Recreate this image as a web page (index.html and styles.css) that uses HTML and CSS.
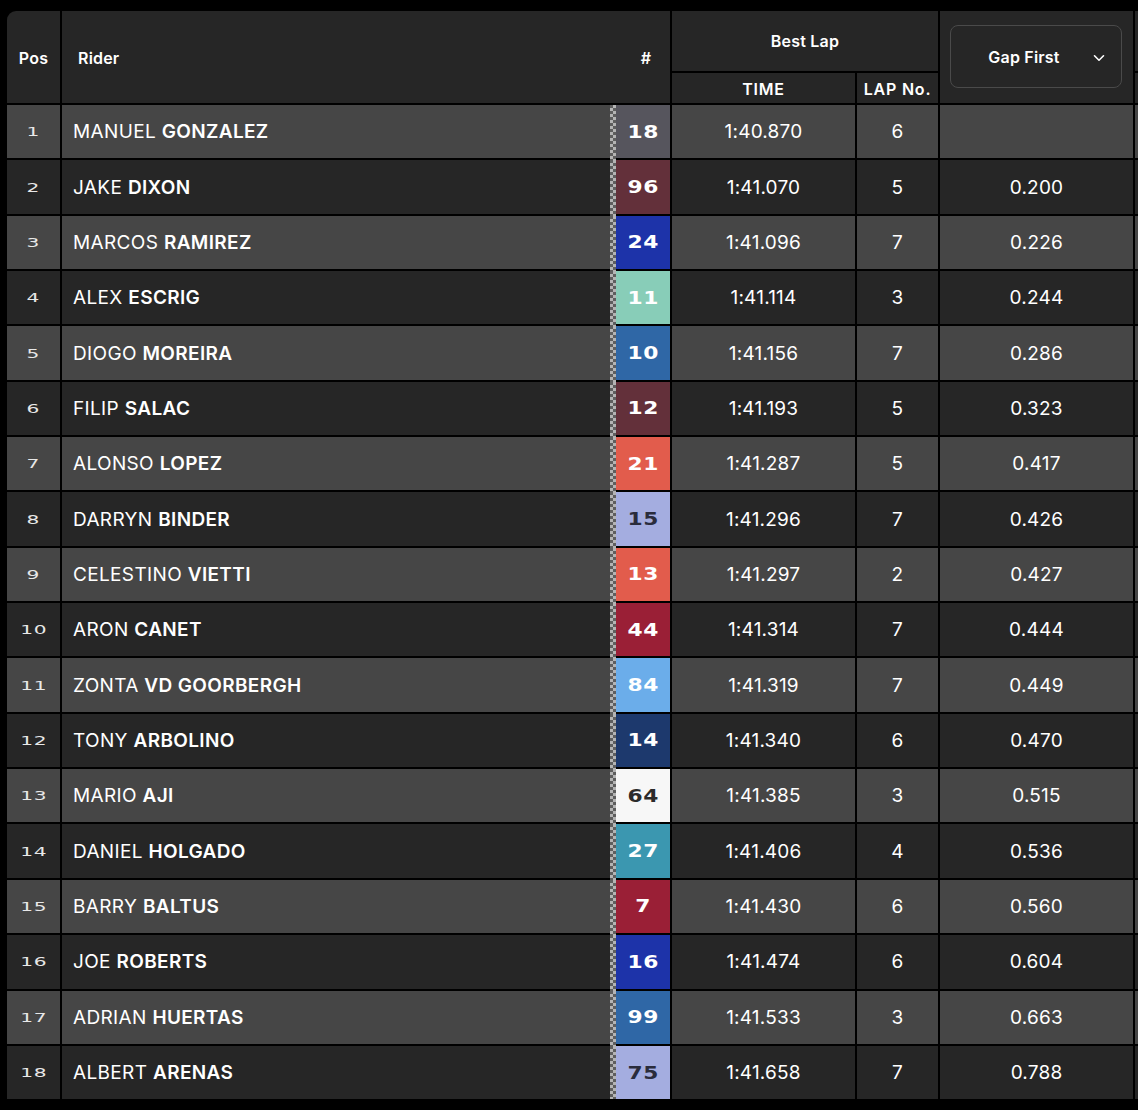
FILE: index.html
```html
<!DOCTYPE html>
<html lang="en">
<head>
<meta charset="utf-8">
<title>Best Lap Standings</title>
<link rel="stylesheet" href="styles.css">
</head>
<body>
<div class="board">
  <div class="head">
    <div class="hc h-pos">Pos</div>
    <div class="hc h-rider"><span>Rider</span><span class="h-num">#</span></div>
    <div class="h-group">
      <div class="hc h-top">Best Lap</div>
      <div class="h-sub"><div class="hc caps">TIME</div><div class="hc caps">LAP No.</div></div>
    </div>
    <div class="hc h-gap">
      <div class="select"><span>Gap First</span>
        <svg class="chev" width="12" height="8" viewBox="0 0 12 8"><path d="M1.5 1.8 L6 6.2 L10.5 1.8" fill="none" stroke="#fff" stroke-width="1.6" stroke-linecap="round" stroke-linejoin="round"/></svg>
      </div>
    </div>
    <div class="h-group">
      <div class="hc h-top"></div>
      <div class="h-sub"><div class="hc"></div></div>
    </div>
  </div>

  <div class="row odd"><div class="pos"><span>1</span></div><div class="rider"><span class="name">MANUEL <b>GONZALEZ</b></span><span class="flag"></span><span class="num n-grey"><span>18</span></span></div><div class="cell">1:40.870</div><div class="cell">6</div><div class="cell"></div><div class="cell"></div></div>
  <div class="row"><div class="pos"><span>2</span></div><div class="rider"><span class="name">JAKE <b>DIXON</b></span><span class="flag"></span><span class="num n-maroon"><span>96</span></span></div><div class="cell">1:41.070</div><div class="cell">5</div><div class="cell">0.200</div><div class="cell"></div></div>
  <div class="row odd"><div class="pos"><span>3</span></div><div class="rider"><span class="name">MARCOS <b>RAMIREZ</b></span><span class="flag"></span><span class="num n-blue"><span>24</span></span></div><div class="cell">1:41.096</div><div class="cell">7</div><div class="cell">0.226</div><div class="cell"></div></div>
  <div class="row"><div class="pos"><span>4</span></div><div class="rider"><span class="name">ALEX <b>ESCRIG</b></span><span class="flag"></span><span class="num n-mint"><span>11</span></span></div><div class="cell">1:41.114</div><div class="cell">3</div><div class="cell">0.244</div><div class="cell"></div></div>
  <div class="row odd"><div class="pos"><span>5</span></div><div class="rider"><span class="name">DIOGO <b>MOREIRA</b></span><span class="flag"></span><span class="num n-mid"><span>10</span></span></div><div class="cell">1:41.156</div><div class="cell">7</div><div class="cell">0.286</div><div class="cell"></div></div>
  <div class="row"><div class="pos"><span>6</span></div><div class="rider"><span class="name">FILIP <b>SALAC</b></span><span class="flag"></span><span class="num n-maroon"><span>12</span></span></div><div class="cell">1:41.193</div><div class="cell">5</div><div class="cell">0.323</div><div class="cell"></div></div>
  <div class="row odd"><div class="pos"><span>7</span></div><div class="rider"><span class="name">ALONSO <b>LOPEZ</b></span><span class="flag"></span><span class="num n-coral"><span>21</span></span></div><div class="cell">1:41.287</div><div class="cell">5</div><div class="cell">0.417</div><div class="cell"></div></div>
  <div class="row"><div class="pos"><span>8</span></div><div class="rider"><span class="name">DARRYN <b>BINDER</b></span><span class="flag"></span><span class="num n-lav"><span>15</span></span></div><div class="cell">1:41.296</div><div class="cell">7</div><div class="cell">0.426</div><div class="cell"></div></div>
  <div class="row odd"><div class="pos"><span>9</span></div><div class="rider"><span class="name">CELESTINO <b>VIETTI</b></span><span class="flag"></span><span class="num n-coral"><span>13</span></span></div><div class="cell">1:41.297</div><div class="cell">2</div><div class="cell">0.427</div><div class="cell"></div></div>
  <div class="row"><div class="pos"><span>10</span></div><div class="rider"><span class="name">ARON <b>CANET</b></span><span class="flag"></span><span class="num n-red"><span>44</span></span></div><div class="cell">1:41.314</div><div class="cell">7</div><div class="cell">0.444</div><div class="cell"></div></div>
  <div class="row odd"><div class="pos"><span>11</span></div><div class="rider"><span class="name">ZONTA <b>VD GOORBERGH</b></span><span class="flag"></span><span class="num n-sky"><span>84</span></span></div><div class="cell">1:41.319</div><div class="cell">7</div><div class="cell">0.449</div><div class="cell"></div></div>
  <div class="row"><div class="pos"><span>12</span></div><div class="rider"><span class="name">TONY <b>ARBOLINO</b></span><span class="flag"></span><span class="num n-navy"><span>14</span></span></div><div class="cell">1:41.340</div><div class="cell">6</div><div class="cell">0.470</div><div class="cell"></div></div>
  <div class="row odd"><div class="pos"><span>13</span></div><div class="rider"><span class="name">MARIO <b>AJI</b></span><span class="flag"></span><span class="num n-white"><span>64</span></span></div><div class="cell">1:41.385</div><div class="cell">3</div><div class="cell">0.515</div><div class="cell"></div></div>
  <div class="row"><div class="pos"><span>14</span></div><div class="rider"><span class="name">DANIEL <b>HOLGADO</b></span><span class="flag"></span><span class="num n-teal"><span>27</span></span></div><div class="cell">1:41.406</div><div class="cell">4</div><div class="cell">0.536</div><div class="cell"></div></div>
  <div class="row odd"><div class="pos"><span>15</span></div><div class="rider"><span class="name">BARRY <b>BALTUS</b></span><span class="flag"></span><span class="num n-red"><span>7</span></span></div><div class="cell">1:41.430</div><div class="cell">6</div><div class="cell">0.560</div><div class="cell"></div></div>
  <div class="row"><div class="pos"><span>16</span></div><div class="rider"><span class="name">JOE <b>ROBERTS</b></span><span class="flag"></span><span class="num n-blue"><span>16</span></span></div><div class="cell">1:41.474</div><div class="cell">6</div><div class="cell">0.604</div><div class="cell"></div></div>
  <div class="row odd"><div class="pos"><span>17</span></div><div class="rider"><span class="name">ADRIAN <b>HUERTAS</b></span><span class="flag"></span><span class="num n-mid"><span>99</span></span></div><div class="cell">1:41.533</div><div class="cell">3</div><div class="cell">0.663</div><div class="cell"></div></div>
  <div class="row last"><div class="pos"><span>18</span></div><div class="rider"><span class="name">ALBERT <b>ARENAS</b></span><span class="flag"></span><span class="num n-lav"><span>75</span></span></div><div class="cell">1:41.658</div><div class="cell">7</div><div class="cell">0.788</div><div class="cell"></div></div>
</div>
</body>
</html>
```

FILE: styles.css
```css
html, body {
  margin: 0;
  background: #000;
  overflow: hidden;
}
body {
  padding: 11px 0 0 7px;
  font-family: Inter, "Open Sans", sans-serif;
  color: #fff;
}
.board {
  width: 1160px;
  display: flex;
  flex-direction: column;
  gap: 2px;
  border-top-left-radius: 9px;
  overflow: hidden;
}
.head {
  display: grid;
  grid-template-columns: 53px 608px 266px 193px 200px;
  gap: 2px;
  height: 92px;
}
.hc {
  background: #262626;
  font-size: 16px;
  font-weight: 600;
  letter-spacing: 0.2px;
  display: flex;
  align-items: center;
  justify-content: center;
}
.hc.caps {
  letter-spacing: 0.8px;
}
.h-pos, .h-rider {
  padding-top: 2px;
}
.h-rider {
  justify-content: space-between;
  padding-left: 16px;
}
.h-num {
  width: 48px;
  text-align: center;
}
.h-group {
  display: flex;
  flex-direction: column;
  gap: 2px;
}
.h-top {
  height: 60px;
}
.h-sub {
  flex: 1;
  display: grid;
  grid-template-columns: 183px 81px;
  gap: 2px;
}
.h-sub .hc {
  padding-top: 2px;
}
.h-gap {
  padding: 14px 11px 15px 10px;
}
.select {
  flex: 1;
  height: 100%;
  box-sizing: border-box;
  border: 1px solid #4a4a4a;
  border-radius: 8px;
  display: flex;
  align-items: center;
  justify-content: center;
  position: relative;
}
.select span {
  margin-right: 24px;
}
.chev {
  position: absolute;
  right: 16px;
  top: 50%;
  margin-top: -3px;
}
.row {
  display: grid;
  grid-template-columns: 53px 608px 183px 81px 193px 200px;
  gap: 2px;
  height: 53.35px;
}
.row > div {
  background: #262626;
}
.row.odd > div {
  background: #464646;
}
.pos {
  display: flex;
  align-items: center;
  justify-content: center;
  font-family: "DejaVu Sans", sans-serif;
  font-size: 13px;
  color: #e8e8e8;
}
.pos span {
  display: inline-block;
  transform: scaleX(1.55);
  letter-spacing: 0.5px;
}
.rider {
  display: flex;
  align-items: stretch;
}
.name {
  flex: 1;
  display: flex;
  align-items: center;
  padding-left: 11px;
  font-size: 19px;
  font-weight: 400;
  letter-spacing: 0.35px;
  white-space: pre;
}
.name b {
  font-weight: 600;
}
.flag {
  width: 6px;
  position: relative;
}
.flag::after {
  content: "";
  position: absolute;
  left: 0;
  right: 0;
  top: 0;
  bottom: -2px;
  background: repeating-conic-gradient(#b4b4b4 0 25%, #5e5e5e 0 50%) 0 0 / 6px 6px;
}
.row.last .flag::after {
  bottom: 0;
}
.num {
  width: 54px;
  display: flex;
  align-items: center;
  justify-content: center;
  font-family: "DejaVu Sans", sans-serif;
  font-weight: 700;
  font-size: 17px;
  color: #fff;
}
.num span {
  display: inline-block;
  transform: scaleX(1.28);
  letter-spacing: 0.5px;
}
.cell {
  display: flex;
  align-items: center;
  justify-content: center;
  font-size: 19px;
  letter-spacing: 0.2px;
}
.n-grey { background: #56555d; }
.n-maroon { background: #63303a; }
.n-blue { background: #1d33a9; }
.n-mint { background: #88cdb8; }
.n-mid { background: #2f67a6; }
.n-coral { background: #e25c4c; }
.n-lav { background: #a4ade0; color: #2a2c3c; }
.n-red { background: #9a1f36; }
.n-sky { background: #6badea; }
.n-navy { background: #1d396d; }
.n-white { background: #f7f7f7; color: #2b2b2b; }
.n-teal { background: #3b97b0; }
```
